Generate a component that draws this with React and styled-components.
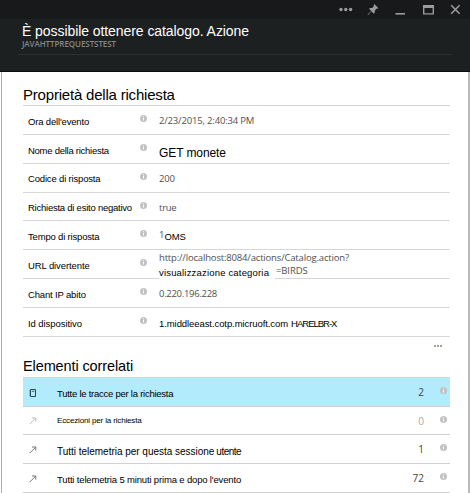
import React from "react";
import styled, { createGlobalStyle } from "styled-components";

const GlobalStyle = createGlobalStyle`
  * { box-sizing: border-box; }
  body { margin: 0; background: #fff; overflow: hidden; }
`;

const Blade = styled.div`
  width: 470px;
  height: 493px;
  overflow: hidden;
  background: #fff;
  font-family: "Liberation Sans", Arial, sans-serif;
  color: #000;
`;

const Header = styled.header`
  height: 72px;
  background: #1d2021;
  border-bottom: 1px solid #0b0c0c;
`;

const TitleBar = styled.div`
  height: 19px;
  background: #18191b;
  display: flex;
  justify-content: flex-end;
  padding-right: 7px;
`;

const WindowIcon = styled.svg`
  width: 14px;
  height: 19px;
  margin-left: ${(p) => p.$gap || 0}px;
  color: #999b9c;
  display: block;
`;

const TitleBlock = styled.div`
  margin: 0 18px;
  height: 36px;
  padding: 4px 0 0 4px;
  border-bottom: 1px solid #2c3031;
`;

const Title = styled.h1`
  margin: 0;
  font-size: 14px;
  font-weight: 400;
  line-height: 16px;
  letter-spacing: -0.07px;
  color: #fff;
  white-space: nowrap;
`;

const Subtitle = styled.div`
  font-family: "Open Sans", "Noto Sans", sans-serif;
  font-size: 8px;
  font-weight: 600;
  line-height: 10px;
  letter-spacing: -0.07px;
  color: #858788;
`;

const Body = styled.main`
  height: 421px;
  margin-left: 1px;
  border-left: 1px solid #acacac;
  border-right: 2px solid #b9b9b9;
  padding: 0 18px 0 21px;
`;

const Heading = styled.h2`
  margin: 0;
  height: ${(p) => p.$height}px;
  padding-top: ${(p) => p.$top}px;
  font-size: ${(p) => p.$size}px;
  font-weight: 400;
  line-height: 17px;
  letter-spacing: ${(p) => p.$ls}px;
  white-space: nowrap;
`;

const List = styled.div`
  border-top: 1px solid #d4d4d4;
`;

const PropertyRow = styled.div`
  display: grid;
  grid-template-columns: 117px 19px 1fr;
  height: 28.86px;
  border-bottom: 1px solid #d6d6d6;
`;

const RelatedRow = styled.div`
  display: grid;
  grid-template-columns: 34px 1fr 60px 26px;
  height: 28.8px;
  border-bottom: 1px solid #d0d0d0;
  background: ${(p) => (p.$selected ? "#b2ebfb" : "transparent")};
`;

const Cell = styled.div`
  padding-top: ${(p) => p.$top}px;
  padding-left: ${(p) => p.$left || 0}px;
  text-align: ${(p) => p.$align || "left"};
  min-width: 0;
`;

const Line = styled.div`
  display: flex;
  height: ${(p) => p.$height || 12}px;
  align-items: flex-start;
`;

const Text = styled.span`
  display: block;
  font-size: ${(p) => p.$size || 9.5}px;
  line-height: 12px;
  letter-spacing: ${(p) => p.$ls || 0}px;
  margin-left: ${(p) => p.$gap || 0}px;
  white-space: pre;
`;

const Value = styled(Text)`
  font-family: "Open Sans", "Noto Sans", sans-serif;
  color: ${(p) => p.$color || "#505050"};
`;

/* Second line of the address, which runs over the row's rule. */
const Overrun = styled(Text)`
  width: 116px;
  height: 16px;
  padding-top: 2px;
  background: #fff;
`;

const More = styled.div`
  height: 21px;
  padding: 8px 8px 0 0;
  display: flex;
  justify-content: flex-end;
  gap: 1px;
`;

const MoreDot = styled.i`
  width: 2px;
  height: 2px;
  background: #a5a394;
`;

const Glyph = styled.svg`
  display: block;
  width: ${(p) => p.$size}px;
  height: ${(p) => p.$size}px;
`;

const Info = () => (
  <Glyph $size={7} viewBox="0 0 7 7">
    <circle cx="3.5" cy="3.5" r="3.5" fill="#c2c2c2" />
    <path d="M3.5 1.2v1M3.5 2.9v2.7" stroke="#fff" strokeWidth="0.9" />
  </Glyph>
);

const Arrow = ({ color }) => (
  <Glyph $size={8} viewBox="0 0 8 8" fill="none" stroke={color} strokeWidth="0.9">
    <path d="M0.6 7.2L6.4 1.4M3 1H6.8V4.6" />
  </Glyph>
);

const Notebook = () => (
  <Glyph $size={8} viewBox="0 0 8 8" fill="none" stroke="#2d4650">
    <path d="M1.5 0.5H6.5V7.5H1.5Z" strokeWidth="1" />
    <path d="M2.8 2.3H5.4" strokeWidth="0.8" />
    <path d="M0.3 2H1.5M0.3 4H1.5M0.3 6H1.5" strokeWidth="0.8" />
  </Glyph>
);

const properties = [
  { label: "Ora dell'evento", ls: -0.17, top: 10, vtop: 9, value: <Value $ls={-0.17}>2/23/2015, 2:40:34 PM</Value> },
  { label: "Nome della richiesta", ls: -0.26, top: 10, vtop: 12, value: <Text $size={12} $ls={-0.09}>GET monete</Text> },
  { label: "Codice di risposta", ls: -0.17, top: 9, vtop: 9, value: <Value $ls={-0.2}>200</Value> },
  { label: "Richiesta di esito negativo", ls: -0.24, top: 9.5, vtop: 9, value: <Value $ls={-0.25}>true</Value> },
  { label: "Tempo di risposta", ls: -0.18, top: 9.5, vtop: 8, value: <Line><Value>1</Value><Cell $top={1.5}><Text $ls={-0.15}>OMS</Text></Cell></Line> },
  {
    label: "URL divertente", ls: -0.1, top: 9.5, vtop: 2,
    value: (
      <>
        <Line $height={13}><Value $ls={-0.17}>http://localhost:8084/actions/Catalog.action?</Value></Line>
        <Line>
          <Overrun $ls={0.18}>visualizzazione categoria</Overrun>
          <Value $ls={-0.1} $gap={1}>=BIRDS</Value>
        </Line>
      </>
    ),
  },
  { label: "Chant IP abito", ls: -0.16, top: 9.5, vtop: 9, value: <Value $ls={-0.3}>0.220.196.228</Value> },
  {
    label: "Id dispositivo", ls: -0.07, top: 9.5, vtop: 9.5,
    value: <Line><Text $ls={-0.08}>1.middleeast.cotp.micruoft.com</Text><Text $ls={-1} $gap={3}>HARELBR-X</Text></Line>,
  },
];

const related = [
  { icon: <Notebook />, itop: 11, selected: true, top: 10, count: "2", parts: [{ text: "Tutte le tracce per la richiesta", ls: -0.25 }] },
  { icon: <Arrow color="#b5b5b5" />, itop: 10.5, muted: true, top: 8.5, count: "0", parts: [{ text: "Eccezioni per la richiesta", ls: -0.15, size: 8 }] },
  { icon: <Arrow color="#666" />, itop: 10.5, top: 10.5, count: "1", parts: [{ text: "Tutti telemetria per questa sessione", ls: -0.02, size: 10 }, { text: "utente", ls: -0.5, size: 10, gap: 2 }] },
  { icon: <Arrow color="#666" />, itop: 10.5, top: 10, count: "72", parts: [{ text: "Tutti telemetria 5 minuti prima e dopo l'evento", ls: -0.16 }] },
];

export default function App() {
  return (
    <Blade>
      <GlobalStyle />
      <Header>
        <TitleBar>
          <WindowIcon viewBox="0 0 14 19" fill="currentColor">
            <circle cx="2" cy="9.5" r="1.7" />
            <circle cx="6.8" cy="9.5" r="1.7" />
            <circle cx="11.6" cy="9.5" r="1.7" />
          </WindowIcon>
          <WindowIcon $gap={13} viewBox="0 0 14 19" fill="currentColor">
            <path d="M8.3 4L12.5 8.2L11.3 8.7L10.7 8.5L8.8 10.5L8.7 13L7.6 13.4L5.4 11.2L2.3 14.8L1.6 15L1.8 14.2L5.3 11L3.2 8.9L3.7 7.9L6.1 7.9L8 6L7.7 5.1Z" />
          </WindowIcon>
          <WindowIcon $gap={14} viewBox="0 0 14 19" fill="currentColor">
            <path d="M1.5 13H11V14.6H1.5Z" />
          </WindowIcon>
          <WindowIcon $gap={14} viewBox="0 0 14 19" fill="currentColor">
            <path fillRule="evenodd" d="M1 5H12V14.6H1ZM2.4 8H10.6V13.2H2.4Z" />
          </WindowIcon>
          <WindowIcon $gap={13} viewBox="0 0 14 19" fill="none" stroke="currentColor" strokeWidth="1.6">
            <path d="M2.2 5.2L10.6 13.8M10.6 5.2L2.2 13.8" />
          </WindowIcon>
        </TitleBar>
        <TitleBlock>
          <Title>È possibile ottenere catalogo. Azione</Title>
          <Subtitle>JAVAHTTPREQUESTSTEST</Subtitle>
        </TitleBlock>
      </Header>
      <Body>
        <Heading $height={33} $top={14} $size={15} $ls={-0.2}>Proprietà della richiesta</Heading>
        <List>
          {properties.map((p) => (
            <PropertyRow key={p.label}>
              <Cell $top={p.top} $left={5}><Text $ls={p.ls}>{p.label}</Text></Cell>
              <Cell $top={9}><Info /></Cell>
              <Cell $top={p.vtop}>{p.value}</Cell>
            </PropertyRow>
          ))}
        </List>
        <More><MoreDot /><MoreDot /><MoreDot /></More>
        <Heading $height={19} $top={0} $size={14.5} $ls={-0.11}>Elementi correlati</Heading>
        <List>
          {related.map((r) => (
            <RelatedRow key={r.count} $selected={r.selected}>
              <Cell $top={r.itop} $left={6}>{r.icon}</Cell>
              <Cell $top={r.top}>
                <Line>
                  {r.parts.map((t) => (
                    <Text key={t.text} $size={t.size} $ls={t.ls} $gap={t.gap}>{t.text}</Text>
                  ))}
                </Line>
              </Cell>
              <Cell $top={8} $align="right"><Value $size={10} $color={r.muted ? "#aaa" : "#444"}>{r.count}</Value></Cell>
              <Cell $top={9} $left={16}><Info /></Cell>
            </RelatedRow>
          ))}
        </List>
      </Body>
    </Blade>
  );
}
